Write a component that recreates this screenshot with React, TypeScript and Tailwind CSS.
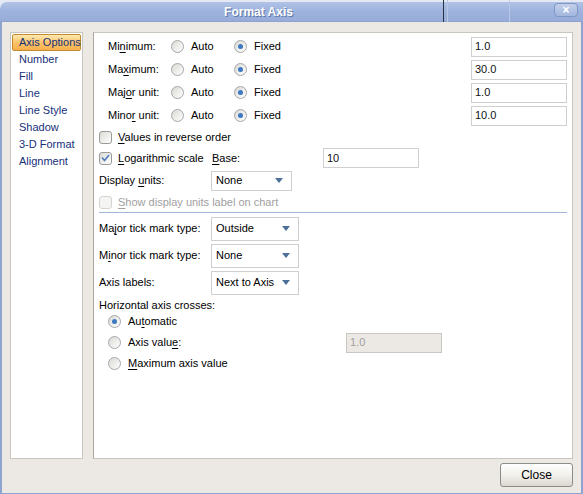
import React from 'react';

const font = { fontFamily: '"Liberation Sans", Arial, sans-serif' };

function U({ children }: { children: React.ReactNode }) {
  return <span className="underline underline-offset-[2px]">{children}</span>;
}

function Radio({ checked, label }: { checked?: boolean; label: React.ReactNode }) {
  return (
    <div className="flex items-center gap-[7px]">
      <span className="flex h-[13px] w-[13px] items-center justify-center rounded-full border border-[#a4a7ab] bg-gradient-to-br from-[#d9d9d3] to-[#ffffff]">
        {checked && <span className="h-[5px] w-[5px] rounded-full bg-[#3e78c0]" />}
      </span>
      <span>{label}</span>
    </div>
  );
}

function Check({ checked, disabled, label }: { checked?: boolean; disabled?: boolean; label: React.ReactNode }) {
  return (
    <div className={`flex items-center gap-[6px] ${disabled ? 'text-[#a0a0a0]' : ''}`}>
      <span
        className={`flex h-[13px] w-[13px] items-center justify-center rounded-[3px] border ${
          disabled ? 'border-[#d4d4d0] bg-[#f4f4f2]' : 'border-[#999a9c] bg-gradient-to-br from-[#dcdcd6] to-[#ffffff]'
        }`}
      >
        {checked && (
          <svg width="9" height="8" viewBox="0 0 9 8">
            <path d="M1 3.5 L3.5 6.5 L8 1" stroke="#4f7dbb" strokeWidth="1.6" fill="none" />
          </svg>
        )}
      </span>
      <span>{label}</span>
    </div>
  );
}

function Field({ value, w, disabled }: { value: string; w: string; disabled?: boolean }) {
  return (
    <div
      className={`flex h-[20px] items-center border px-[3px] ${w} ${
        disabled ? 'border-[#c9c7c2] bg-[#ece9e4] text-[#a0a0a0]' : 'border-[#cfcfcf] bg-white text-[#111]'
      }`}
    >
      {value}
    </div>
  );
}

function Select({ value, w, h }: { value: string; w: string; h: string }) {
  return (
    <div className={`flex items-center justify-between border border-[#cfcfcf] bg-white pl-[4px] pr-[8px] ${w} ${h}`}>
      <span className="whitespace-nowrap">{value}</span>
      <svg width="8" height="5" viewBox="0 0 8 5">
        <path d="M0 0 H8 L4 5 Z" fill="#4d6f9a" />
      </svg>
    </div>
  );
}

const navItems = ['Axis Options', 'Number', 'Fill', 'Line', 'Line Style', 'Shadow', '3-D Format', 'Alignment'];

function BoundRow({ label, value }: { label: React.ReactNode; value: string }) {
  return (
    <div className="flex h-[23px] items-center">
      <div className="w-[63px] pl-[9px] box-content">{label}</div>
      <div className="w-[63px]">
        <Radio label="Auto" />
      </div>
      <div className="flex-1">
        <Radio checked label="Fixed" />
      </div>
      <Field value={value} w="w-[96px]" />
    </div>
  );
}

export default function App() {
  return (
    <div className="relative h-[494px] w-[583px] overflow-hidden bg-[#e4e9f3] text-[11px] text-black" style={font}>
      <div className="relative mt-[2px] flex h-[20px] items-center justify-center rounded-tl-[7px] border-b border-[#8da2cc] bg-gradient-to-b from-[#b0c2e6] via-[#9db3dd] to-[#97acd8] pr-[66px]">
        <span className="text-[12px] font-bold text-white [text-shadow:1px_1px_0_#5d76a8]">Format Axis</span>
        <div className="absolute left-[443px] top-[-2px] h-[22px] w-px bg-[#2a3144]" />
        <div className="absolute left-[447px] top-[-2px] h-[22px] w-px bg-[#b9c7e4]" />
        <div className="absolute left-[509px] top-[-2px] h-[22px] w-px bg-[#b9c7e4]" />
        <div className="absolute left-[554px] top-[1px] flex h-[14px] w-[24px] items-center justify-center rounded-[4px] border border-[#7f95c4] bg-gradient-to-b from-[#c3d0ea] to-[#a3b6de] text-[12px] font-bold leading-none text-white">
          ×
        </div>
      </div>

      <div className="flex h-[472px] flex-col border-l-2 border-r-2 border-b border-[#8ea3cf] bg-[#ece9e4] pl-[8px] pr-[8px] pt-[10px]">
        <div className="flex flex-1 gap-[10px]">
          <div className="w-[73px] border border-[#c9c6bf] bg-white p-[1px] text-[#16307a]">
            {navItems.map((n, i) => (
              <div
                key={n}
                className={`flex h-[17px] items-center whitespace-nowrap px-[6px] ${
                  i === 0 ? 'rounded-[2px] border border-[#c48a2f] bg-gradient-to-b from-[#fde9b0] via-[#fbc46a] to-[#f8b04a]' : 'border border-transparent'
                }`}
              >
                {n}
              </div>
            ))}
          </div>

          <div className="flex-1 border border-[#c9c6bf] border-l-[#aaa69d] bg-white pl-[5px] pr-[5px] pt-[2px]">
            <BoundRow label={<>Mi<U>n</U>imum:</>} value="1.0" />
            <BoundRow label={<>Ma<U>x</U>imum:</>} value="30.0" />
            <BoundRow label={<>Maj<U>o</U>r unit:</>} value="1.0" />
            <BoundRow label={<>Mino<U>r</U> unit:</>} value="10.0" />

            <div className="flex h-[20px] items-center">
              <Check label={<><U>V</U>alues in reverse order</>} />
            </div>
            <div className="flex h-[22px] items-center">
              <div className="w-[113px]">
                <Check checked label={<><U>L</U>ogarithmic scale</>} />
              </div>
              <div className="w-[111px]">
                <U>B</U>ase:
              </div>
              <Field value="10" w="w-[96px]" />
            </div>
            <div className="flex h-[23px] items-center">
              <div className="w-[112px]">
                Display <U>u</U>nits:
              </div>
              <Select value="None" w="w-[81px]" h="h-[20px]" />
            </div>
            <div className="flex h-[20px] items-center">
              <Check disabled label={<><U>S</U>how display units label on chart</>} />
            </div>

            <div className="mb-[2px] h-px bg-[#9fb6d8]" />

            {[
              { l: <>Ma<U>j</U>or tick mark type:</>, v: 'Outside' },
              { l: <>M<U>i</U>nor tick mark type:</>, v: 'None' },
              { l: <>Axis labels:</>, v: 'Next to Axis' },
            ].map((r, i) => (
              <div key={i} className="flex h-[27px] items-center">
                <div className="w-[112px]">{r.l}</div>
                <Select value={r.v} w="w-[88px]" h="h-[24px]" />
              </div>
            ))}

            <div className="flex h-[15px] items-end leading-none">Horizontal axis crosses:</div>
            <div className="pl-[9px]">
              <div className="flex h-[21px] items-center">
                <Radio checked label={<>Au<U>t</U>omatic</>} />
              </div>
              <div className="flex h-[21px] items-center">
                <div className="w-[238px]">
                  <Radio label={<>Axis valu<U>e</U>:</>} />
                </div>
                <Field disabled value="1.0" w="w-[96px]" />
              </div>
              <div className="flex h-[21px] items-center">
                <Radio label={<><U>M</U>aximum axis value</>} />
              </div>
            </div>
          </div>
        </div>

        <div className="flex h-[34px] items-start justify-end pt-[4px]">
          <button className="flex h-[24px] w-[73px] items-center justify-center rounded-[3px] border border-[#8c8c88] bg-gradient-to-b from-[#fefefe] via-[#f2f1ec] to-[#dcd8cf] text-[12px] text-black">
            Close
          </button>
        </div>
      </div>
    </div>
  );
}
